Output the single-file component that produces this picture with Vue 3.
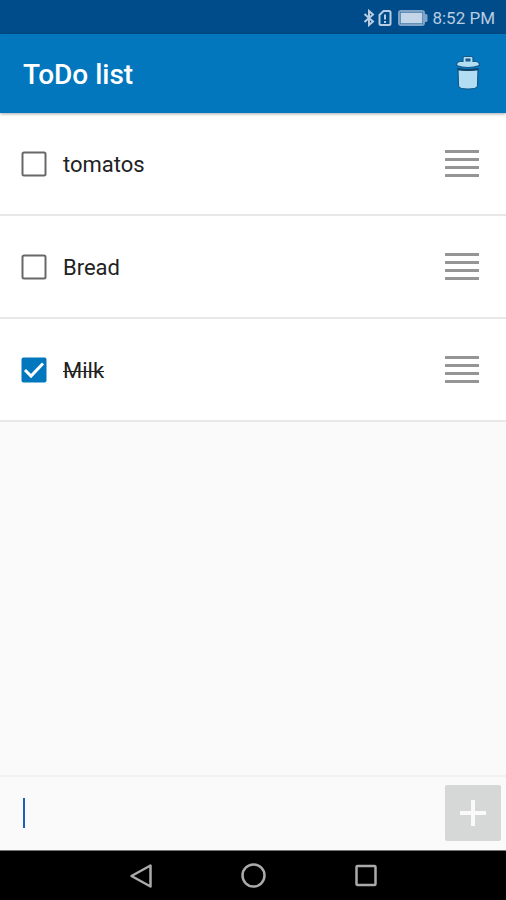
<script setup>
import { ref } from 'vue'

const items = ref([
  { id: 1, text: 'tomatos', done: false },
  { id: 2, text: 'Bread', done: false },
  { id: 3, text: 'Milk', done: true },
])
const draft = ref('')
let nextId = 4

function add() {
  const text = draft.value.trim()
  if (!text) return
  items.value.push({ id: nextId++, text, done: false })
  draft.value = ''
}

function clearDone() {
  items.value = items.value.filter((item) => !item.done)
}
</script>

<template>
  <div class="screen">
    <div class="status">
      <svg class="bluetooth" viewBox="0 0 12 18" aria-hidden="true">
        <path d="M1.500 5 10 12.500 6 16V2L10 5.500 1.500 13" />
      </svg>
      <svg class="sim" viewBox="0 0 14 18" aria-hidden="true">
        <path d="M5.500 2H11Q12.500 2 12.500 3.500V14.500Q12.500 16 11 16H3Q1.500 16 1.500 14.500V6Z" />
        <path d="M7 5.500V10.500M7 12V14" />
      </svg>
      <svg class="battery" viewBox="0 0 30 16" aria-hidden="true">
        <rect class="shell" x="1" y="1" width="25" height="14" rx="2" />
        <rect class="charge" x="2.500" y="2.500" width="22" height="11" />
        <path class="tip" d="M27 4h1q1.500 0 1.500 1.500v5q0 1.500-1.500 1.500h-1z" />
      </svg>
      <span class="time">8:52 PM</span>
    </div>

    <header class="bar">
      <h1>ToDo list</h1>
      <button type="button" class="trash" aria-label="Delete completed" @click="clearDone">
        <svg viewBox="0 0 28 38" aria-hidden="true">
          <path class="lid" d="M2.500 10.500Q2.500 7 6 6.500H9V3Q9 1.500 10.500 1.500H17.500Q19 1.500 19 3V6.500H22Q25.500 7 25.500 10.500Q20 12.500 14 12.500T2.500 10.500Z" />
          <rect class="hole" x="11.500" y="3.500" width="5" height="3" />
          <path class="can" d="M4 14.500Q14 16 24 14.500L23.500 31Q23 34 14 34T4.500 31Z" />
          <path class="rim" d="M3.500 14Q14 16 24.500 14" />
        </svg>
      </button>
    </header>

    <ul class="list">
      <li v-for="item in items" :key="item.id" class="row">
        <label class="entry">
          <input v-model="item.done" type="checkbox" class="native" />
          <svg class="box" viewBox="0 0 26 26" aria-hidden="true">
            <rect v-if="!item.done" class="frame" x="1.500" y="1.500" width="23" height="23" rx="1.500" />
            <template v-else>
              <rect class="fill" x="0.500" y="0.500" width="25" height="25" rx="2" />
              <path class="tick" d="M4 13 10 19 22 6.500" />
            </template>
          </svg>
          <span class="text" :class="{ done: item.done }">{{ item.text }}</span>
        </label>
        <button type="button" class="handle" aria-label="Reorder">
          <i /><i /><i /><i />
        </button>
      </li>
    </ul>

    <form class="composer" @submit.prevent="add">
      <span v-if="!draft" class="caret" />
      <input v-model="draft" type="text" class="field" aria-label="New item" />
      <button type="submit" class="add" aria-label="Add item">
        <svg viewBox="0 0 28 28" aria-hidden="true"><path d="M14 1V27M1 14H27" /></svg>
      </button>
    </form>

    <nav class="nav">
      <button type="button" aria-label="Back">
        <svg viewBox="0 0 26 26"><path d="M23.500 2.500V23.500L4.500 13Z" /></svg>
      </button>
      <button type="button" aria-label="Home">
        <svg viewBox="0 0 26 26"><circle cx="13.500" cy="12.500" r="11" /></svg>
      </button>
      <button type="button" aria-label="Recent apps">
        <svg viewBox="0 0 26 26"><rect x="3.500" y="3" width="19" height="19" rx="1" /></svg>
      </button>
    </nav>
  </div>
</template>

<style>
body {
  margin: 0;
  background: #fafafa;
}
</style>

<style scoped>
.screen {
  display: flex;
  flex-direction: column;
  min-height: 100vh;
  background: #fafafa;
  color: #222;
  font-family: Roboto, 'Liberation Sans', sans-serif;
}
button {
  display: flex;
  padding: 0;
  border: 0;
  background: none;
  cursor: pointer;
}
svg {
  display: block;
  fill: none;
}

.status {
  display: flex;
  align-items: center;
  justify-content: flex-end;
  box-sizing: border-box;
  height: 34px;
  padding: 2px 11px 0 0;
  background: #004c8a;
  color: #b8cde0;
}
.bluetooth {
  width: 12px;
  height: 18px;
  margin-right: 3px;
  stroke: #b8cde0;
  stroke-width: 2;
}
.sim {
  width: 14px;
  height: 18px;
  margin-right: 6px;
  stroke: #b8cde0;
  stroke-width: 2;
}
.battery {
  width: 30px;
  height: 16px;
  margin-right: 4px;
}
.shell {
  stroke: #7fa4c8;
  stroke-width: 2;
}
.charge {
  fill: #c3d5e6;
}
.tip {
  fill: #7fa4c8;
}
.time {
  font-size: 17px;
  line-height: 24px;
}

.bar {
  position: relative;
  display: flex;
  align-items: center;
  justify-content: space-between;
  box-sizing: border-box;
  height: 79px;
  padding: 0 24px 0 23px;
  background: #0277bd;
  box-shadow: 0 1px 3px rgba(0, 0, 0, 0.35);
}
h1 {
  margin: 0;
  padding-top: 2px;
  color: #fff;
  font-size: 28px;
  font-weight: 500;
  line-height: 36px;
}
.trash svg {
  width: 28px;
  height: 38px;
}
.lid,
.can {
  fill: #b3ddf3;
  stroke: #16588a;
  stroke-width: 1.2;
}
.hole {
  fill: #16588a;
}
.rim {
  stroke: #123f66;
  stroke-width: 2;
}

.list {
  margin: 0;
  padding: 0;
  list-style: none;
}
.row {
  display: flex;
  align-items: center;
  box-sizing: border-box;
  height: 103px;
  padding: 0 27px 0 21px;
  border-bottom: 2px solid #e8e8e8;
  background: #fff;
}
.entry {
  position: relative;
  display: flex;
  flex: 1;
  align-items: center;
  gap: 16px;
}
.native {
  position: absolute;
  width: 26px;
  height: 26px;
  margin: 0;
  opacity: 0;
}
.box {
  width: 26px;
  height: 26px;
}
.frame {
  stroke: #686868;
  stroke-width: 2;
}
.fill {
  fill: #0277bd;
}
.tick {
  stroke: #fff;
  stroke-width: 3;
}
.text {
  padding-top: 2px;
  font-size: 22px;
  line-height: 28px;
}
.done {
  text-decoration: line-through 1px;
}
.handle {
  flex-direction: column;
  gap: 5px;
}
.handle i {
  width: 34px;
  height: 3px;
  background: #959595;
}

.composer {
  display: flex;
  align-items: center;
  box-sizing: border-box;
  height: 75px;
  margin-top: auto;
  padding: 0 5px 2px 23px;
  border-top: 2px solid #f2f2f2;
}
.caret {
  width: 2px;
  height: 30px;
  background: #1d5fb0;
}
.field {
  flex: 1;
  min-width: 0;
  height: 48px;
  padding: 0;
  border: 0;
  outline: 0;
  background: none;
  color: inherit;
  font: inherit;
  font-size: 22px;
}
.add {
  align-items: center;
  justify-content: center;
  width: 56px;
  height: 56px;
  border-radius: 2px;
  background: #d6d7d7;
}
.add svg {
  width: 28px;
  height: 28px;
  stroke: #fafafa;
  stroke-width: 4;
}

.nav {
  display: flex;
  align-items: center;
  justify-content: center;
  gap: 87px;
  box-sizing: border-box;
  height: 50px;
  border-top: 1px solid #777;
  background: #000;
}
.nav svg {
  width: 26px;
  height: 26px;
  stroke: #aaa;
  stroke-width: 2.5;
  stroke-linejoin: round;
}
</style>
